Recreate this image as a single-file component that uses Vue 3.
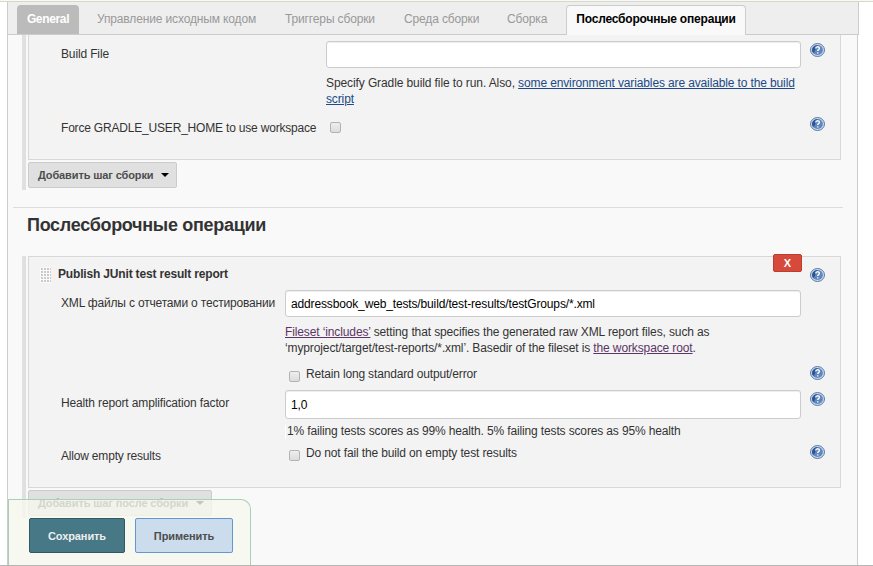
<script setup>
import { h } from 'vue'

const tabs = [
  { id: 'general', label: 'General' },
  { id: 'scm', label: 'Управление исходным кодом' },
  { id: 'triggers', label: 'Триггеры сборки' },
  { id: 'env', label: 'Среда сборки' },
  { id: 'build', label: 'Сборка' },
  { id: 'post', label: 'Послесборочные операции' },
]

const HelpIcon = () =>
  h('svg', { class: 'help-icon', width: 15, height: 14, viewBox: '0 0 15 14' }, [
    h('ellipse', { cx: 7.5, cy: 7, rx: 7, ry: 6.5, fill: '#ccd8e8', stroke: '#4a6fa8', 'stroke-width': 0.9 }),
    h('ellipse', { cx: 7.5, cy: 7, rx: 5.4, ry: 5, fill: '#5f86bd' }),
    h('path', { d: 'M3.2 10A5.4 5 0 0 1 8 2C5.5 4 6 8 3.2 10Z', fill: '#2c5594' }),
    h('path', {
      d: 'M5.7 5.4C5.7 3.4 9.4 3.3 9.4 5.2C9.4 6.6 7.7 6.6 7.7 8.1M7.7 9.2V10.5',
      fill: 'none', stroke: '#f4f7fb', 'stroke-width': 1.5,
    }),
  ])
</script>

<template>
  <div class="page">
    <div class="panel">
      <nav class="tabs">
        <a v-for="t in tabs" :key="t.id" class="tab" :class="t.id">{{ t.label }}</a>
      </nav>

      <section class="section first">
        <div class="card gradle">
          <div class="row build-file">
            <div class="label">Build File</div>
            <div class="control">
              <input class="field" type="text" />
              <p class="desc"><span class="lead">Specify Gradle build file to run. Also, </span><a class="link">some environment variables are available to the build</a><br /><a class="link">script</a></p>
            </div>
            <HelpIcon />
          </div>
          <div class="row force">
            <div class="label">Force GRADLE_USER_HOME to use workspace</div>
            <div class="control"><span class="check"></span></div>
            <HelpIcon />
          </div>
        </div>
        <button class="add">Добавить шаг сборки<i class="caret"></i></button>
      </section>

      <hr class="rule" />
      <h2 class="heading">Послесборочные операции</h2>

      <section class="section second">
        <div class="card junit">
          <button class="delete">X</button>
          <div class="row title-row">
            <svg class="grip" width="11" height="16">
              <defs>
                <pattern id="dots" width="3" height="3" patternUnits="userSpaceOnUse">
                  <rect width="3" height="3" fill="#fafafa" />
                  <rect x="1" y="1" width="2" height="2" fill="#cbcbcb" />
                </pattern>
              </defs>
              <rect width="11" height="16" fill="url(#dots)" />
            </svg>
            <strong class="title">Publish JUnit test result report</strong>
            <HelpIcon />
          </div>
          <div class="row xml">
            <div class="label">XML файлы с отчетами о тестировании</div>
            <div class="control">
              <input class="field" type="text" value="addressbook_web_tests/build/test-results/testGroups/*.xml" />
              <p class="desc"><a class="link visited">Fileset ‘includes’</a> setting that specifies the generated raw XML report files, such as<br />‘myproject/target/test-reports/*.xml’. Basedir of the fileset is <a class="link visited">the workspace root</a>.</p>
            </div>
          </div>
          <div class="row retain">
            <div class="control option"><span class="check"></span>Retain long standard output/error</div>
            <HelpIcon />
          </div>
          <div class="row health">
            <div class="label">Health report amplification factor</div>
            <div class="control">
              <input class="field tall" type="text" value="1,0" />
              <p class="result">1% failing tests scores as 99% health. 5% failing tests scores as 95% health</p>
            </div>
            <HelpIcon />
          </div>
          <div class="row empty">
            <div class="label">Allow empty results</div>
            <div class="control option"><span class="check"></span>Do not fail the build on empty test results</div>
            <HelpIcon />
          </div>
        </div>
        <button class="add post-add">Добавить шаг после сборки<i class="caret"></i></button>
      </section>
    </div>

    <div class="sticky">
      <button class="save">Сохранить</button>
      <button class="apply">Применить</button>
    </div>
  </div>
</template>

<style>
body { margin: 0; background: #fff; overflow: hidden; }
</style>

<style scoped>
.page, .page * { box-sizing: border-box; }
.page {
  position: relative;
  width: 873px;
  height: 566px;
  border-top: 1px solid #f8f9f4;
  border-bottom: 1px solid #b5b5b5;
  overflow: hidden;
  font: 12px/16px "Liberation Sans", Arial, sans-serif;
  letter-spacing: -.14px;
  color: #333;
  background: linear-gradient(#d5d8ca 0 1px, #fff 1px);
}
button, input { font-family: inherit; margin: 0; }
p, h2 { margin: 0; }
.panel {
  width: 851px;
  height: 563px;
  margin: 1px 0 0 7px;
  background: #f9f9f9;
  border-left: 1px solid #ccc;
  border-right: 1px solid #ccc;
}
.tabs {
  display: flex;
  align-items: flex-end;
  width: 851px;
  height: 33px;
  padding-left: 9px;
  background: #eee;
  border-bottom: 1px solid #ccc;
  border-right: 1px solid #ccc;
  letter-spacing: -.14px;
}
.tab {
  height: 29px;
  padding-top: 6px;
  color: #999;
  white-space: nowrap;
  flex: none;
}
.general {
  width: 62px;
  text-align: center;
  font-weight: bold;
  letter-spacing: -.35px;
  color: #fff;
  background: #bbb;
  border-radius: 4px 4px 0 0;
}
.scm { margin-left: 18px; width: 188px; }
.triggers { width: 119px; }
.env { width: 103px; }
.build { width: 59px; }
.post {
  width: 180px;
  height: 30px;
  margin-bottom: -1px;
  padding-top: 5px;
  text-align: center;
  font-weight: bold;
  letter-spacing: -.2px;
  color: #000;
  background: #f9f9f9;
  border: 1px solid #ccc;
  border-bottom: 0;
  border-radius: 4px 4px 0 0;
}
.section {
  margin-left: 14px;
  padding-left: 2px;
  width: 819px;
  border-left: 4px solid #e0e0e0;
}
.first { height: 155px; }
.second { height: 262px; }
.card {
  position: relative;
  width: 813px;
  background: #f3f3f3;
  border: 1px solid #d8d8d8;
}
.gradle { height: 125px; border-top: 0; }
.junit { height: 232px; }
.row {
  display: grid;
  grid-template-columns: 224px 516px 15px;
  padding-left: 32px;
  align-items: start;
}
.help-icon { display: block; grid-column: 3; margin-left: 9px; overflow: visible; }
.gradle .row { grid-template-columns: 265px 475px 15px; }
.field {
  display: block;
  width: 100%;
  height: 27px;
  padding: 0 5px;
  border: 1px solid #ccc;
  border-radius: 3px;
  background: #fff;
  box-shadow: inset 0 1px 1px rgba(0, 0, 0, .075);
  font-size: 12px;
  letter-spacing: -.145px;
  color: #000;
}
.field.tall { height: 29px; }
.label { white-space: nowrap; }
.link { color: #204a87; text-decoration: underline; }
.visited { color: #5c3566; }
.check {
  display: block;
  flex: none;
  width: 11px;
  height: 11px;
  border: 1px solid #b3b3b3;
  border-radius: 2px;
  background: linear-gradient(#eee, #dcdcdc);
}
.option { display: flex; white-space: nowrap; }
.option .check { margin: 5px 6px 0 4px; }

.build-file { height: 81px; padding-top: 6px; }
.build-file .label { padding-top: 5px; }
.build-file .desc { margin-top: 7px; white-space: nowrap; letter-spacing: -.13px; }
.lead { letter-spacing: -.1px; }
.build-file .help-icon { margin-top: 2px; }
.force .label { padding-top: 4px; letter-spacing: -.19px; }
.force .check { margin: 6px 0 0 4px; }
.force .help-icon { margin-top: 1px; }

.junit .title-row {
  display: flex;
  height: 33px;
  padding: 9px 15px 0 11px;
}
.grip { margin-top: 1px; }
.title { margin-left: 7px; letter-spacing: -.17px; }
.title-row .help-icon { margin: 2px 0 0 auto; }
.xml { height: 76px; }
.xml .label { padding-top: 5px; letter-spacing: -.18px; }
.xml .desc { margin-top: 7px; white-space: nowrap; letter-spacing: -.12px; }
.retain { height: 24px; }
.retain .option { grid-column: 2; letter-spacing: -.16px; }
.health { height: 54px; }
.health .label { padding-top: 5px; }
.health .help-icon { margin-top: 2px; }
.result {
  height: 14px;
  margin-top: 6px;
  padding-left: 1px;
  line-height: 12px;
  white-space: nowrap;
  border-left: 1px solid #fff;
}
.empty { padding-top: 1px; }
.empty .label { padding-top: 3px; letter-spacing: -.19px; }

.delete {
  position: absolute;
  top: -3px;
  right: 38px;
  width: 29px;
  height: 18px;
  padding: 0;
  font-size: 11px;
  font-weight: bold;
  line-height: 16px;
  color: #fff;
  background: #d54a3b;
  border: 1px solid #bd3d30;
  border-radius: 2px;
}
.add {
  display: flex;
  align-items: center;
  width: 149px;
  height: 26px;
  margin-top: 2px;
  padding: 0 0 0 9px;
  font-size: 11px;
  font-weight: bold;
  letter-spacing: -.12px;
  color: #4d4d4d;
  background: #e0e0e0;
  border: 1px solid #ccc;
  border-radius: 2px;
  white-space: nowrap;
}
.post-add { width: 184px; }
.caret {
  margin-left: 8px;
  border: 4px solid transparent;
  border-top-color: #000;
  border-bottom: 0;
}
.rule {
  width: 830px;
  height: 1px;
  margin: 17px 0 0 5px;
  border: 0;
  background: #ddd;
}
.heading {
  height: 48px;
  padding: 6px 0 0 19px;
  font-size: 18px;
  line-height: 22px;
  letter-spacing: -.3px;
  white-space: nowrap;
}
.sticky {
  position: absolute;
  left: 8px;
  bottom: 0;
  display: flex;
  gap: 10px;
  width: 243px;
  height: 66px;
  padding: 18px 0 0 20px;
  background: rgba(246, 248, 238, .8);
  border: 1px solid #a9cfb8;
  border-bottom: 0;
  border-radius: 0 10px 0 0;
}
.save, .apply {
  width: 96px;
  height: 35px;
  padding: 0;
  font-size: 11px;
  font-weight: bold;
  letter-spacing: -.1px;
  color: #eee;
  background: #467886;
  border: 1px solid #315866;
  border-radius: 2px;
}
.apply {
  width: 98px;
  color: #4d4d4d;
  background: #cbdced;
  border-color: #6297d0;
}
</style>
